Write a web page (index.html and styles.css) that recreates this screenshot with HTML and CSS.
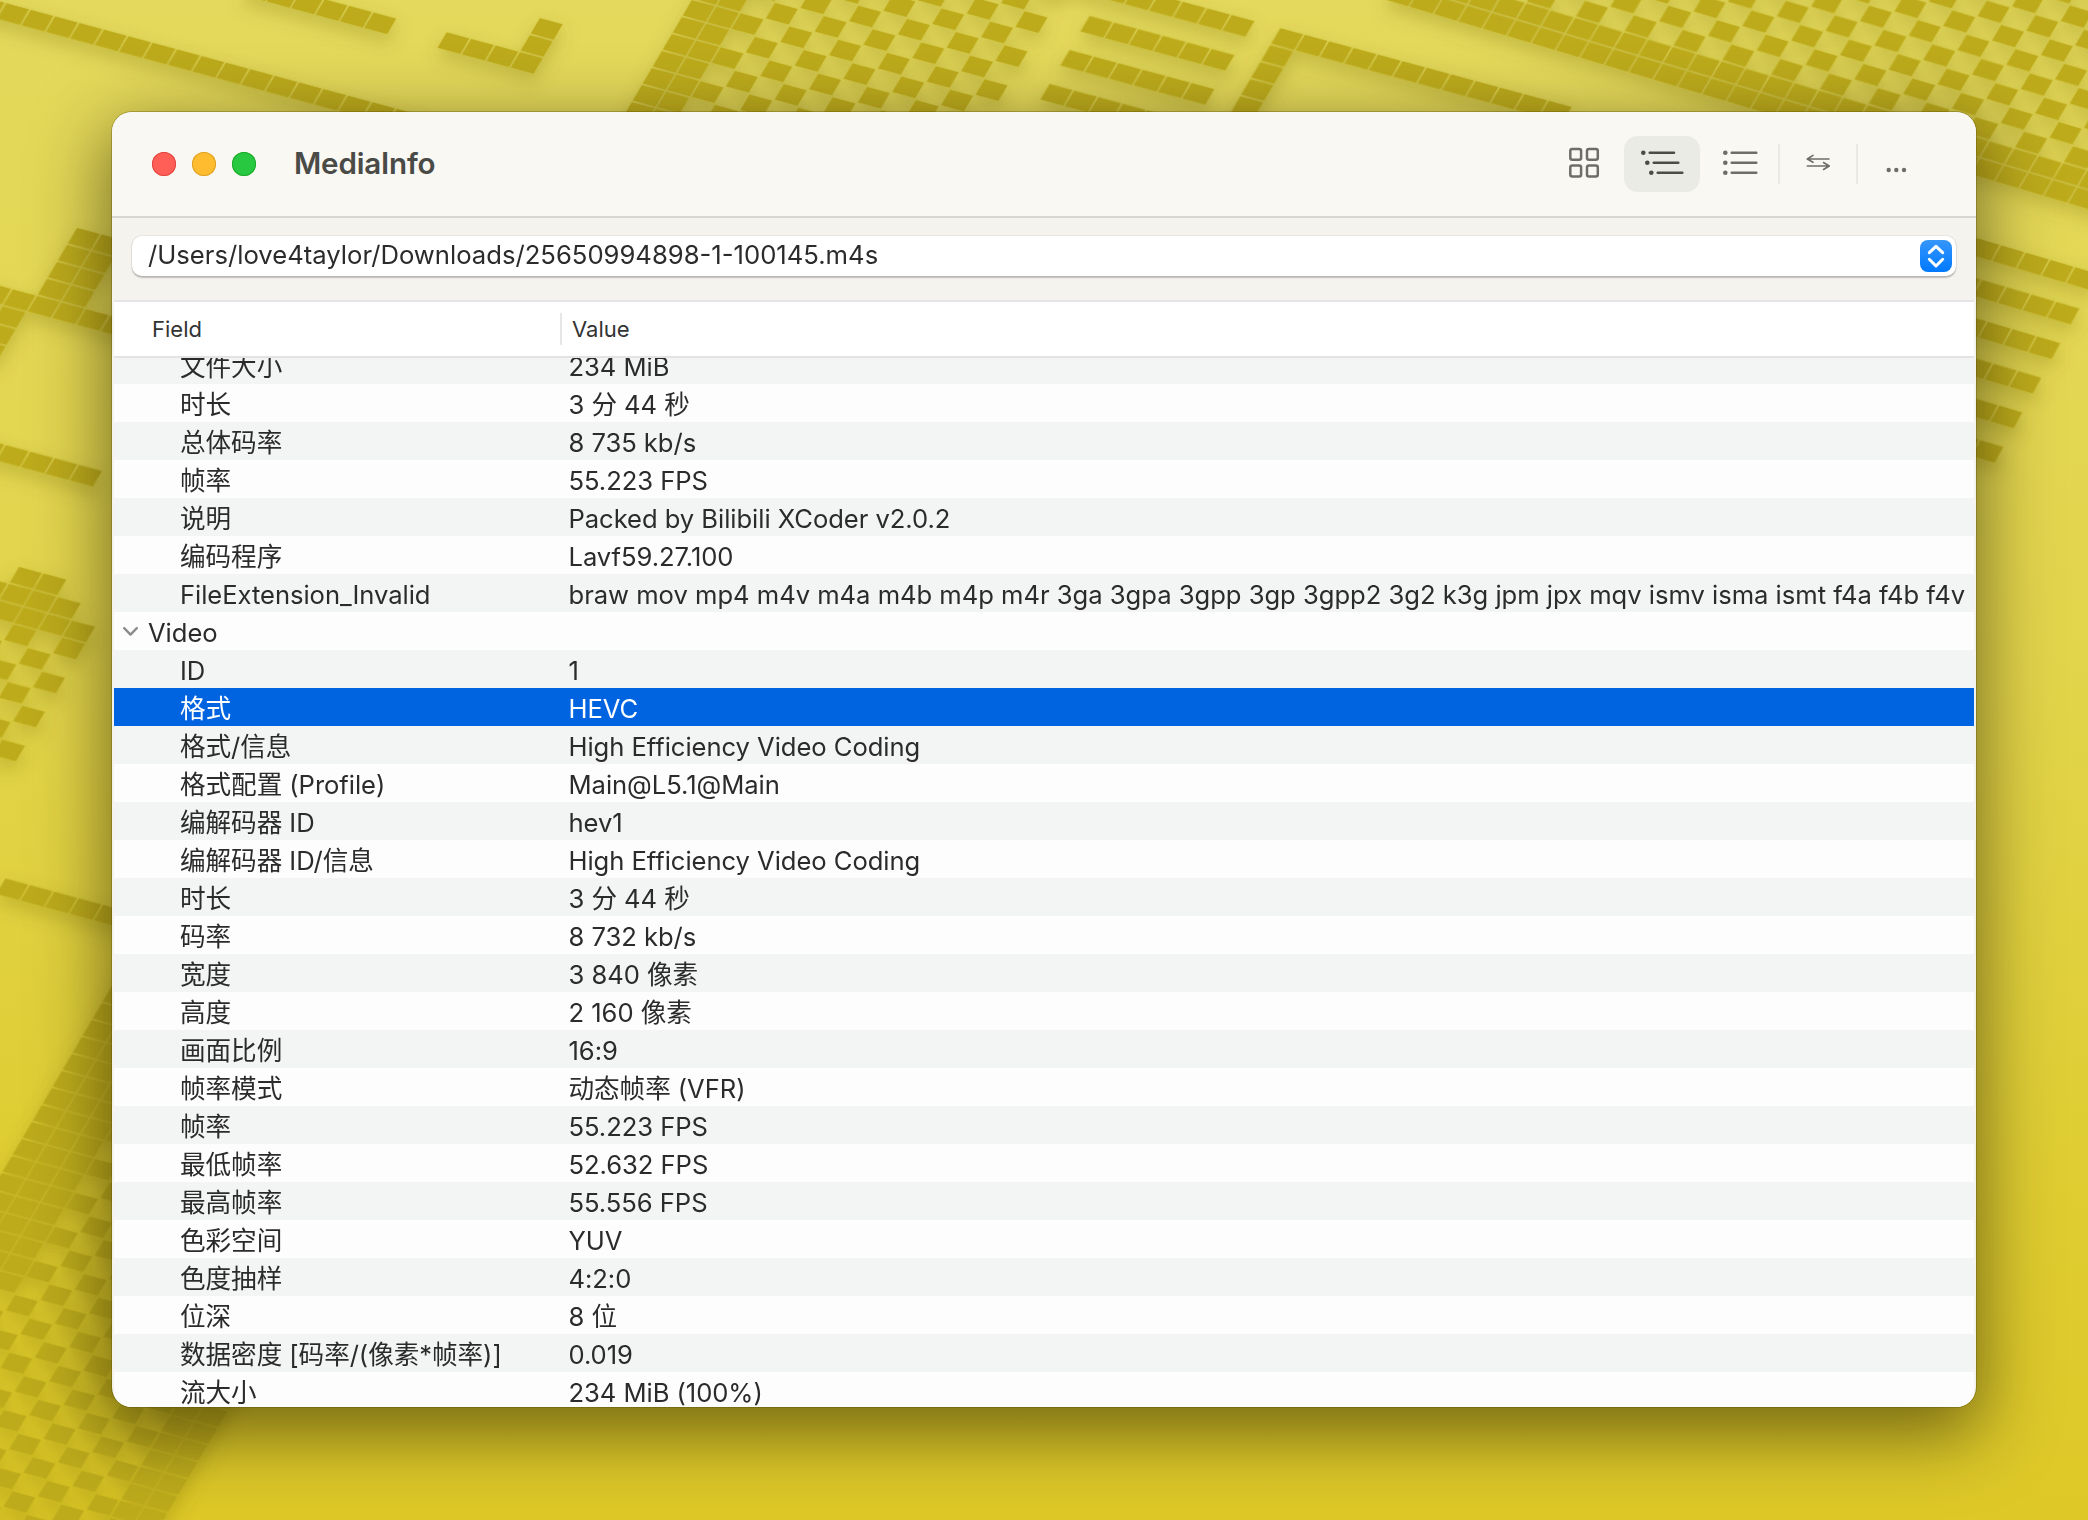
FILE: index.html
```html
<!DOCTYPE html>
<html lang="zh">
<head>
<meta charset="utf-8">
<title>MediaInfo</title>
<link rel="stylesheet" href="styles.css">
</head>
<body>
<svg class="wallpaper" viewBox="0 0 2088 1520" aria-hidden="true">
  <defs>
    <pattern id="solid" patternUnits="userSpaceOnUse" width="100" height="100">
      <rect class="tile" x="3" y="4" width="94" height="92"/>
    </pattern>
    <pattern id="check" patternUnits="userSpaceOnUse" width="200" height="200">
      <rect class="tile" x="3" y="4" width="94" height="92"/>
      <rect class="tile" x="103" y="104" width="94" height="92"/>
    </pattern>
    <filter id="soft" x="-5%" y="-5%" width="110%" height="110%">
      <feDropShadow dx="0" dy="8" stdDeviation="9" flood-color="#6b5c00" flood-opacity=".28"/>
    </filter>
  </defs>
  <g filter="url(#soft)">
    <!-- top-left lattice -->
    <g transform="matrix(.244 .066 -.1 .17 5.9 10.7)">
      <rect x="1600" y="-500" width="400" height="100" fill="url(#solid)"/>
      <rect x="1900" y="-700" width="100" height="200" fill="url(#solid)"/>
      <rect x="800" y="-500" width="600" height="100" fill="url(#solid)"/>
      <rect x="2400" y="-2600" width="200" height="2600" fill="url(#solid)"/>
      <rect x="2600" y="-2600" width="1100" height="2600" fill="url(#check)"/>
    </g>
    <g transform="matrix(.244 .066 -.1 .17 5.9 2.2)">
      <rect x="-200" y="0" width="2400" height="100" fill="url(#solid)"/>
    </g>
    <!-- maze pieces above the window -->
    <g transform="matrix(.244 .066 -.1 .17 12 19.2)">
      <rect x="3600" y="-1700" width="800" height="100" fill="url(#solid)"/>
      <rect x="3800" y="-1500" width="600" height="100" fill="url(#solid)"/>
      <rect x="3800" y="-1300" width="600" height="100" fill="url(#solid)"/>
      <rect x="3800" y="-1100" width="1000" height="100" fill="url(#solid)"/>
      <rect x="4500" y="-1700" width="1200" height="100" fill="url(#solid)"/>
      <rect x="4500" y="-1600" width="100" height="700" fill="url(#solid)"/>
    </g>
    <!-- big checker, upper right -->
    <g transform="matrix(.244 .0727 -.1 .17 1384 0)">
      <rect x="0" y="-200" width="3000" height="200" fill="url(#solid)"/>
      <rect x="0" y="-2200" width="3000" height="2000" fill="url(#check)"/>
    </g>
    <!-- right stripes -->
    <g transform="matrix(.247 .073 -.095 .173 1976 237)">
      <rect x="-100" y="0" width="600" height="100" fill="url(#solid)"/>
      <rect x="-100" y="200" width="600" height="100" fill="url(#solid)"/>
      <rect x="-100" y="400" width="600" height="100" fill="url(#solid)"/>
      <rect x="-100" y="600" width="600" height="100" fill="url(#solid)"/>
      <rect x="-100" y="800" width="600" height="100" fill="url(#solid)"/>
      <rect x="-100" y="1000" width="600" height="100" fill="url(#solid)"/>
      <rect x="-100" y="1400" width="600" height="100" fill="url(#solid)"/>
    </g>
    <!-- left side -->
    <g transform="matrix(.244 .066 -.1 .17 5.9 10.7)">
      <rect x="700" y="1000" width="200" height="400" fill="url(#solid)"/>
      <rect x="400" y="1400" width="800" height="100" fill="url(#solid)"/>
      <rect x="600" y="1500" width="100" height="300" fill="url(#solid)"/>
      <rect x="800" y="2200" width="500" height="100" fill="url(#solid)"/>
      <rect x="1800" y="4400" width="500" height="100" fill="url(#solid)"/>
      <rect x="1200" y="2800" width="200" height="100" fill="url(#solid)"/>
      <rect x="1100" y="2900" width="400" height="100" fill="url(#solid)"/>
      <rect x="1000" y="3000" width="600" height="100" fill="url(#solid)"/>
      <rect x="1000" y="3100" width="600" height="800" fill="url(#check)"/>
      <rect x="2400" y="4000" width="300" height="2400" fill="url(#solid)"/>
      <rect x="2400" y="6400" width="1100" height="3200" fill="url(#check)"/>
      <rect x="2700" y="4000" width="800" height="2400" fill="url(#check)"/>
      <rect x="3500" y="4000" width="200" height="5600" fill="url(#solid)"/>
    </g>
  </g>
</svg>

<main class="window">
  <header class="titlebar">
    <div class="lights">
      <span class="light red"></span>
      <span class="light amber"></span>
      <span class="light green"></span>
    </div>
    <h1 class="app-title">MediaInfo</h1>
    <nav class="tools">
      <button class="tool">
        <svg class="ico" viewBox="0 0 76 56"><g class="ln">
          <rect x="24.3" y="13" width="10.8" height="10.8" rx="2"/><rect x="41" y="13" width="10.8" height="10.8" rx="2"/>
          <rect x="24.3" y="29.6" width="10.8" height="10.8" rx="2"/><rect x="41" y="29.6" width="10.8" height="10.8" rx="2"/>
        </g></svg>
      </button>
      <button class="tool active">
        <svg class="ico" viewBox="0 0 76 56">
          <g class="fl"><circle cx="19.3" cy="16.7" r="2.3"/><circle cx="23.3" cy="26.7" r="2.3"/><circle cx="27.3" cy="36.7" r="2.3"/></g>
          <g class="ln"><path d="M25.7 16.7H50M29.7 26.7H54.3M33.7 36.7H58.3"/></g>
        </svg>
      </button>
      <button class="tool">
        <svg class="ico" viewBox="0 0 76 56">
          <g class="fl"><circle cx="23.3" cy="16.7" r="2.3"/><circle cx="23.3" cy="26.7" r="2.3"/><circle cx="23.3" cy="36.7" r="2.3"/></g>
          <g class="ln"><path d="M29.7 16.7H54.3M29.7 26.7H54.3M29.7 36.7H54.3"/></g>
        </svg>
      </button>
      <span class="sep"></span>
      <button class="tool">
        <svg class="ico" viewBox="0 0 76 56"><g class="ln thin"><path d="M33 19.3L27.3 23L33 26.3M27.3 23H49M43.5 26.5L49.3 30L43.5 33.5M49.3 30H27.3"/></g></svg>
      </button>
      <span class="sep"></span>
      <button class="tool">
        <svg class="ico" viewBox="0 0 76 56"><g class="fl"><circle cx="30.7" cy="34" r="2.2"/><circle cx="38.3" cy="34" r="2.2"/><circle cx="46" cy="34" r="2.2"/></g></svg>
      </button>
    </nav>
  </header>

  <section class="pathbar">
    <div class="combo">
      <span class="combo-text">/Users/love4taylor/Downloads/25650994898-1-100145.m4s</span>
      <span class="stepper">
        <svg viewBox="0 0 32 32"><path d="M9.3 12.7L16 6.3L22.7 12.7M9.3 19.3L16 26L22.7 19.3"/></svg>
      </span>
    </div>
  </section>

  <section class="table">
    <div class="thead">
      <span class="th th-field">Field</span>
      <span class="th th-value">Value</span>
    </div>
    <div class="rows">
      <div class="rows-inner">
        <div class="row"><span>文件大小</span><span>234 MiB</span></div>
        <div class="row"><span>时长</span><span>3 分 44 秒</span></div>
        <div class="row"><span>总体码率</span><span>8 735 kb/s</span></div>
        <div class="row"><span>帧率</span><span>55.223 FPS</span></div>
        <div class="row"><span>说明</span><span>Packed by Bilibili XCoder v2.0.2</span></div>
        <div class="row"><span>编码程序</span><span>Lavf59.27.100</span></div>
        <div class="row"><span>FileExtension_Invalid</span><span class="long">braw mov mp4 m4v m4a m4b m4p m4r 3ga 3gpa 3gpp 3gp 3gpp2 3g2 k3g jpm jpx mqv ismv isma ismt f4a f4b f4v</span></div>
        <div class="row group"><svg class="chev" viewBox="0 0 15 9"><path d="M1.2 1.2L7.5 7.6L13.8 1.2"/></svg><span>Video</span></div>
        <div class="row"><span>ID</span><span>1</span></div>
        <div class="row selected"><span>格式</span><span>HEVC</span></div>
        <div class="row"><span>格式/信息</span><span>High Efficiency Video Coding</span></div>
        <div class="row"><span>格式配置 (Profile)</span><span>Main@L5.1@Main</span></div>
        <div class="row"><span>编解码器 ID</span><span>hev1</span></div>
        <div class="row"><span>编解码器 ID/信息</span><span>High Efficiency Video Coding</span></div>
        <div class="row"><span>时长</span><span>3 分 44 秒</span></div>
        <div class="row"><span>码率</span><span>8 732 kb/s</span></div>
        <div class="row"><span>宽度</span><span>3 840 像素</span></div>
        <div class="row"><span>高度</span><span>2 160 像素</span></div>
        <div class="row"><span>画面比例</span><span>16:9</span></div>
        <div class="row"><span>帧率模式</span><span>动态帧率 (VFR)</span></div>
        <div class="row"><span>帧率</span><span>55.223 FPS</span></div>
        <div class="row"><span>最低帧率</span><span>52.632 FPS</span></div>
        <div class="row"><span>最高帧率</span><span>55.556 FPS</span></div>
        <div class="row"><span>色彩空间</span><span>YUV</span></div>
        <div class="row"><span>色度抽样</span><span>4:2:0</span></div>
        <div class="row"><span>位深</span><span>8 位</span></div>
        <div class="row"><span>数据密度 [码率/(像素*帧率)]</span><span>0.019</span></div>
        <div class="row"><span>流大小</span><span>234 MiB (100%)</span></div>
      </div>
    </div>
  </section>
</main>
</body>
</html>
```
FILE: styles.css
```css
* { box-sizing: border-box; }
html, body { margin: 0; height: 100%; }
body {
  width: 2088px;
  height: 1520px;
  overflow: hidden;
  position: relative;
  padding: 112px 0 0 112px;
  background: linear-gradient(180deg, #e4d95c 0%, #e2d44a 45%, #dfcc30 80%, #ddc827 100%);
  font-family: Inter, "Noto Sans CJK SC", sans-serif;
  color: #2b2b2b;
}
.wallpaper { position: absolute; left: 0; top: 0; width: 2088px; height: 1520px; }
.tile { fill: #bdab1b; }

.window {
  position: relative;
  width: 1864px;
  height: 1295px;
  border-radius: 20px;
  overflow: hidden;
  display: flex;
  flex-direction: column;
  background: #f4f3ee;
  box-shadow: 0 0 0 1px rgba(80,70,0,.3), 0 22px 70px 6px rgba(30,25,0,.55);
}

.titlebar {
  height: 106px;
  flex: none;
  display: flex;
  align-items: flex-start;
  padding: 24px 42px 0 40px;
  background: #f9f8f2;
  border-bottom: 2px solid #d7d7d2;
}
.lights { display: flex; gap: 16px; padding-top: 16px; }
.light { width: 24px; height: 24px; border-radius: 50%; display: block; }
.red { background: #ff5f57; box-shadow: inset 0 0 0 1px #e2463f; }
.amber { background: #febc2e; box-shadow: inset 0 0 0 1px #dea123; }
.green { background: #28c840; box-shadow: inset 0 0 0 1px #1aab29; }
.app-title {
  margin: 0 0 0 38px;
  font-size: 29.6px;
  line-height: 55px;
  font-weight: 600;
  color: #4a4a47;
  letter-spacing: -.2px;
}
.tools { margin-left: auto; display: flex; align-items: flex-start; gap: 2px; }
.tool {
  width: 76px;
  height: 56px;
  padding: 0;
  border: 0;
  background: none;
  border-radius: 14px;
  display: block;
}
.tool.active { background: #ebebe6; }
.sep { width: 2px; height: 40px; margin: 8px -2px 0; background: #eaeae5; }
.ico { display: block; width: 76px; height: 56px; color: #6e6e68; }
.active .ico { color: #4b4b48; }
.ln { fill: none; stroke: currentColor; stroke-width: 2.5; stroke-linecap: round; stroke-linejoin: round; }
.ln.thin { stroke-width: 1.6; }
.fl { fill: currentColor; }

.pathbar { height: 82px; flex: none; padding: 18px 20px 0; }
.combo {
  height: 40px;
  background: #fff;
  border-radius: 10px;
  box-shadow: 0 0 0 1px rgba(0,0,0,.05), 0 1.5px 1.5px rgba(0,0,0,.22);
  display: flex;
  align-items: center;
  padding: 0 4px 0 16px;
}
.combo-text { font-size: 25.65px; line-height: 38px; height: 40px; flex: 1; white-space: nowrap; color: #2b2b2b; }
.stepper {
  width: 32px;
  height: 32px;
  border-radius: 8px;
  background: linear-gradient(180deg, #3596fb, #0079fe);
  display: block;
}
.stepper svg { display: block; width: 32px; height: 32px; fill: none; stroke: #fff; stroke-width: 3; stroke-linecap: round; stroke-linejoin: round; }

.table {
  flex: 1;
  min-height: 0;
  margin: 0 2px;
  border-top: 2px solid #e4e4e6;
  background: #fdfdfd;
  display: flex;
  flex-direction: column;
}
.thead {
  height: 56px;
  flex: none;
  background: #fff;
  border-bottom: 2px solid #e3e3e3;
  display: flex;
  align-items: center;
  font-size: 22px;
  color: #333;
}
.th-field { margin-left: 38px; width: 408px; }
.th-value { padding-left: 10px; height: 32px; line-height: 33px; border-left: 2px solid #e6e6e6; }
.rows { flex: 1; min-height: 0; overflow: hidden; }
.rows-inner { margin-top: -12px; }
.row {
  height: 38px;
  display: grid;
  grid-template-columns: 454.5px 1fr;
  align-items: start;
  font-size: 25.6px;
  letter-spacing: -.05px;
  line-height: 38px;
  white-space: nowrap;
}
.row span { display: block; overflow: hidden; padding-top: 2px; height: 38px; }
.row span:first-child { padding-left: 66px; }
.row .long { letter-spacing: -.02px; }
.row:nth-child(odd) { background: #f3f4f4; }
.row.selected { background: #0064e1; color: #fff; }
.row.group { display: flex; padding-left: 9px; align-items: center; }
.row.group span:first-of-type { padding-left: 10px; }
.chev { width: 15px; height: 9px; fill: none; stroke: #8c8c8c; stroke-width: 2.4; stroke-linecap: round; stroke-linejoin: round; }
```
